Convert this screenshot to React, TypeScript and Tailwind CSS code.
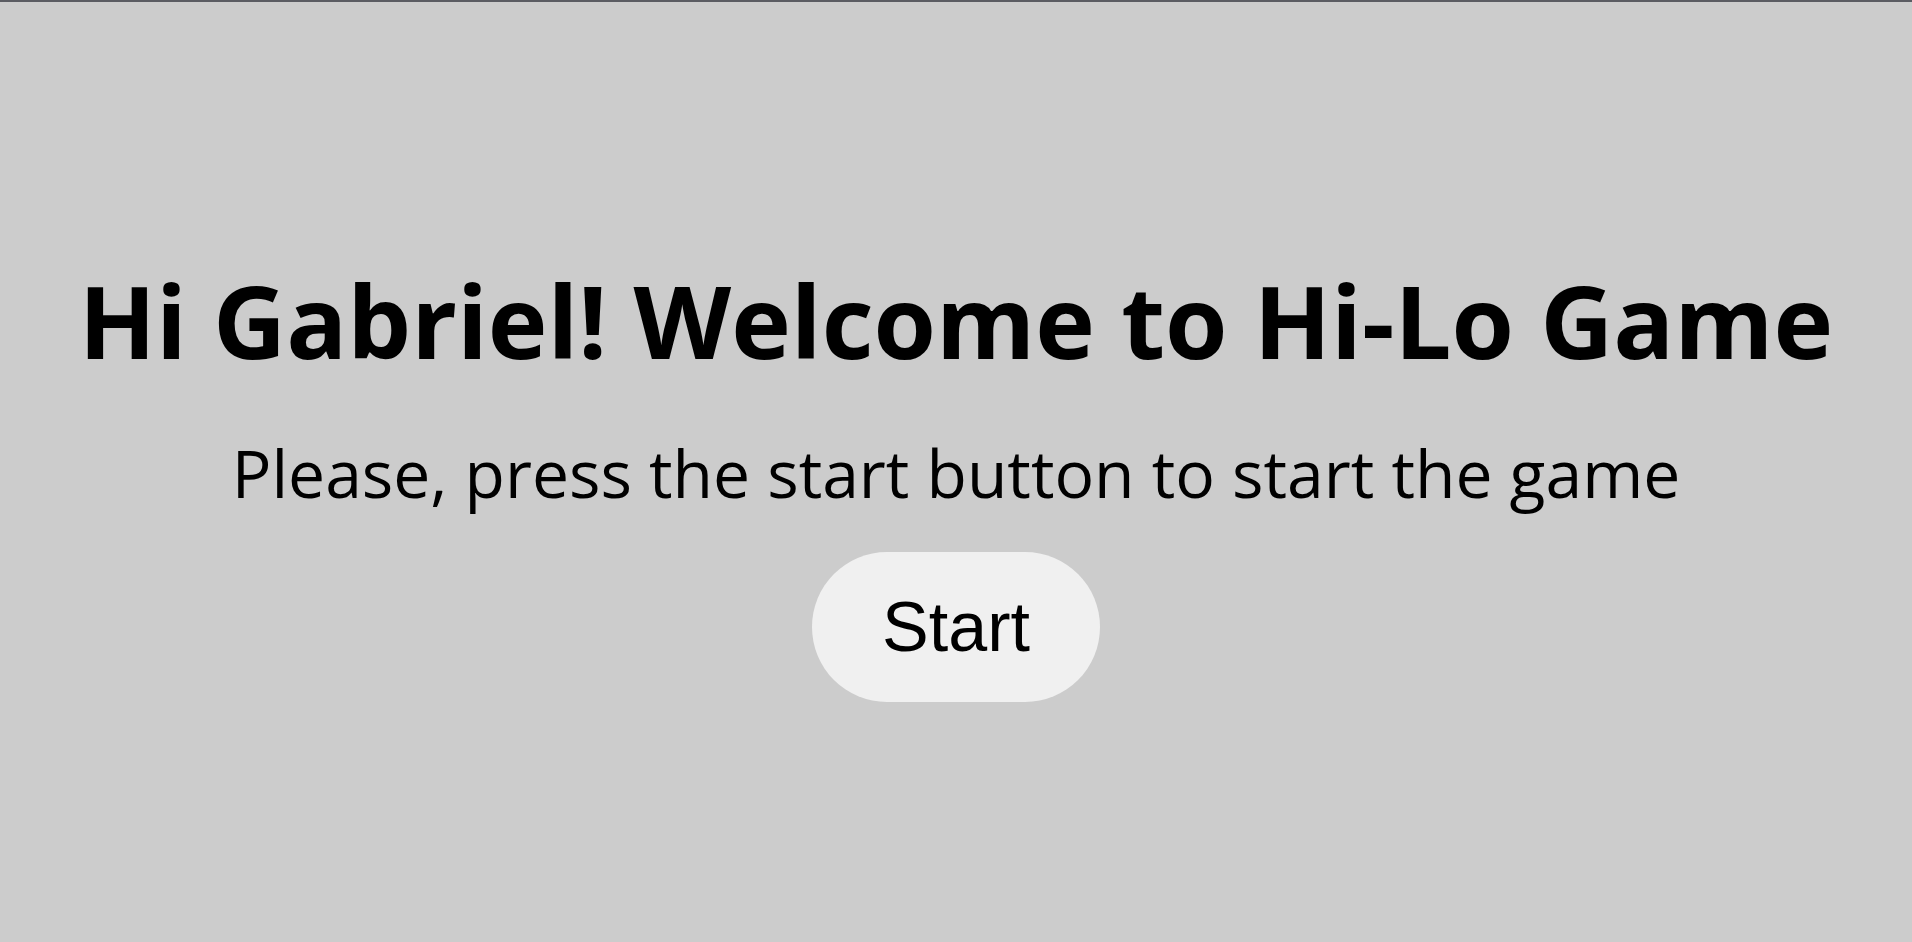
export default function App() {
    return (
        <div className="flex h-screen w-full flex-col items-center border-t-2 border-[#5b5c62] bg-[#cccccc] text-black" style={{ fontFamily: '"Open Sans", "Noto Sans", sans-serif' }}>
            <h1 className="mt-[258px] text-[101px] leading-[120px] font-bold whitespace-nowrap">
                Hi Gabriel! Welcome to Hi-Lo Game
            </h1>
            <p className="mt-[47px] text-[66px] leading-[90px] whitespace-nowrap">
                Please, press the start button to start the game
            </p>
            <button className="mt-[35px] h-[150px] w-[288px] rounded-[75px] bg-[#f0f0f0] text-[70px] text-black" style={{ fontFamily: '"Liberation Sans", Arial, sans-serif' }}>
                Start
            </button>
        </div>
    )
}
